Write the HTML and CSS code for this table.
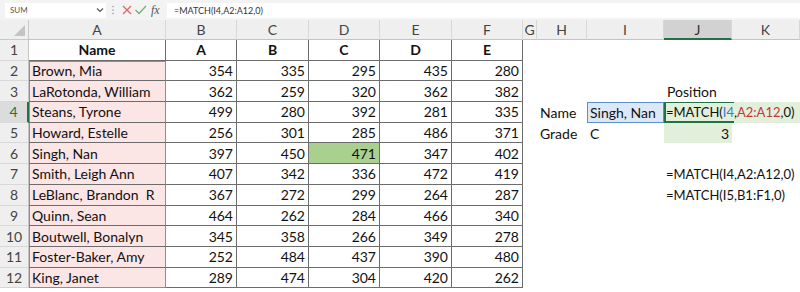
FILE: index.html
```html
<!DOCTYPE html>
<html>
<head>
<meta charset="utf-8">
<link rel="stylesheet" href="styles.css">
</head>
<body>
<div class="fbar">
  <div class="namebox"><span>SUM</span><svg width="8" height="6" viewBox="0 0 8 6"><polyline points="1,1.5 4,4.5 7,1.5" fill="none" stroke="#555" stroke-width="1.2"/></svg></div>
  <div class="tools">
    <svg width="44" height="20" viewBox="0 0 44 20">
      <circle cx="7" cy="6.5" r="0.8" fill="#9a9a9a"/><circle cx="7" cy="10" r="0.8" fill="#9a9a9a"/><circle cx="7" cy="13.5" r="0.8" fill="#9a9a9a"/>
      <path d="M17 6 L25 14 M25 6 L17 14" stroke="#e06767" stroke-width="1.3" fill="none"/>
      <polyline points="29.5,10 33,13.5 40,6" stroke="#72b072" stroke-width="1.3" fill="none"/>
    </svg>
    <span class="fx">fx</span>
  </div>
  <div class="formula">=MATCH(I4,A2:A12,0)</div>
</div>
<div class="sheet">
  <div class="corner"><svg width="11" height="11" viewBox="0 0 11 11"><polygon points="11,0 11,11 0,11" fill="#c4c4c4"/></svg></div>
  <div class="ch">A</div><div class="ch">B</div><div class="ch">C</div><div class="ch">D</div><div class="ch">E</div><div class="ch">F</div><div class="ch">G</div><div class="ch">H</div><div class="ch">I</div><div class="ch sel">J</div><div class="ch">K</div>

  <div class="rh">1</div><div class="c hd">Name</div><div class="c hd">A</div><div class="c hd">B</div><div class="c hd">C</div><div class="c hd">D</div><div class="c hd">E</div><div class="g"></div><div class="g"></div><div class="g"></div><div class="g"></div><div class="g"></div>

  <div class="rh">2</div><div class="c nm first">Brown, Mia</div><div class="c n">354</div><div class="c n">335</div><div class="c n">295</div><div class="c n">435</div><div class="c n">280</div><div class="g"></div><div class="g"></div><div class="g"></div><div class="g"></div><div class="g"></div>

  <div class="rh">3</div><div class="c nm">LaRotonda, William</div><div class="c n">362</div><div class="c n">259</div><div class="c n">320</div><div class="c n">362</div><div class="c n">382</div><div class="g"></div><div class="g"></div><div class="g"></div><div class="g x">Position</div><div class="g"></div>

  <div class="rh sel">4</div><div class="c nm">Steans, Tyrone</div><div class="c n">499</div><div class="c n">280</div><div class="c n">392</div><div class="c n">281</div><div class="c n">335</div><div class="g"></div><div class="g x">Name</div><div class="g x i4">Singh, Nan</div><div class="g fm j4">=MATCH(<span class="blue">I4</span>,<span class="red">A2:A12</span>,0)</div>

  <div class="rh">5</div><div class="c nm">Howard, Estelle</div><div class="c n">256</div><div class="c n">301</div><div class="c n">285</div><div class="c n">486</div><div class="c n">371</div><div class="g"></div><div class="g x">Grade</div><div class="g x">C</div><div class="g n j5">3</div><div class="g"></div>

  <div class="rh">6</div><div class="c nm">Singh, Nan</div><div class="c n">397</div><div class="c n">450</div><div class="c n d6">471</div><div class="c n">347</div><div class="c n">402</div><div class="g"></div><div class="g"></div><div class="g"></div><div class="g"></div><div class="g"></div>

  <div class="rh">7</div><div class="c nm">Smith, Leigh Ann</div><div class="c n">407</div><div class="c n">342</div><div class="c n">336</div><div class="c n">472</div><div class="c n">419</div><div class="g"></div><div class="g"></div><div class="g"></div><div class="g fm">=MATCH(I4,A2:A12,0)</div>

  <div class="rh">8</div><div class="c nm">LeBlanc, Brandon&nbsp; R</div><div class="c n">367</div><div class="c n">272</div><div class="c n">299</div><div class="c n">264</div><div class="c n">287</div><div class="g"></div><div class="g"></div><div class="g"></div><div class="g fm">=MATCH(I5,B1:F1,0)</div>

  <div class="rh">9</div><div class="c nm">Quinn, Sean</div><div class="c n">464</div><div class="c n">262</div><div class="c n">284</div><div class="c n">466</div><div class="c n">340</div><div class="g"></div><div class="g"></div><div class="g"></div><div class="g"></div><div class="g"></div>

  <div class="rh">10</div><div class="c nm">Boutwell, Bonalyn</div><div class="c n">345</div><div class="c n">358</div><div class="c n">266</div><div class="c n">349</div><div class="c n">278</div><div class="g"></div><div class="g"></div><div class="g"></div><div class="g"></div><div class="g"></div>

  <div class="rh">11</div><div class="c nm">Foster-Baker, Amy</div><div class="c n">252</div><div class="c n">484</div><div class="c n">437</div><div class="c n">390</div><div class="c n">480</div><div class="g"></div><div class="g"></div><div class="g"></div><div class="g"></div><div class="g"></div>

  <div class="rh">12</div><div class="c nm last">King, Janet</div><div class="c n">289</div><div class="c n">474</div><div class="c n">304</div><div class="c n">420</div><div class="c n">262</div><div class="g"></div><div class="g"></div><div class="g"></div><div class="g"></div><div class="g"></div>
</div>
</body>
</html>
```
FILE: styles.css
```css
* { box-sizing: border-box; }
html, body { margin: 0; padding: 0; }
body {
  width: 800px;
  height: 292px;
  overflow: hidden;
  background: #ffffff;
  font-family: Lato, "Open Sans", sans-serif;
}
.fbar {
  display: flex;
  align-items: center;
  height: 20px;
  background: #f3f3f3;
  padding-left: 5px;
}
.namebox {
  width: 101px;
  height: 15px;
  background: #ffffff;
  display: flex;
  align-items: center;
  justify-content: space-between;
  padding: 0 2px 0 5px;
  font-size: 8px;
  color: #555;
}
.tools {
  width: 61px;
  display: flex;
  align-items: center;
}
.fx {
  font-family: "Liberation Serif", serif;
  font-style: italic;
  font-size: 12px;
  color: #555;
  margin-left: 1px;
}
.formula {
  flex: 1;
  height: 15px;
  background: #ffffff;
  padding-left: 7px;
  font-size: 9px;
  color: #333;
  display: flex;
  align-items: center;
}
.sheet {
  display: grid;
  grid-template-columns: 29px 137px 71px 72px 71px 72px 71px 14px 50px 77px 68px 68px;
  grid-template-rows: 20px repeat(12, 20.7px);
  font-size: 14px;
  color: #111;
}
.sheet > div {
  display: flex;
  align-items: center;
  white-space: nowrap;
  overflow: hidden;
}
.corner {
  background: #efefef;
  border-right: 1px solid #c8c8c8;
  border-bottom: 1px solid #c8c8c8;
  justify-content: flex-end;
  align-items: flex-end !important;
  padding: 0 3px 3px 0;
}
.ch {
  background: #efefef;
  justify-content: center;
  color: #444;
  border-right: 1px solid #d8d8d8;
  border-bottom: 1px solid #c4c4c4;
}
.ch.sel {
  background: #d2d2d2;
  border-bottom: 2px solid #217346;
  color: #333;
}
.rh {
  background: #efefef;
  justify-content: center;
  color: #444;
  border-right: 1px solid #c4c4c4;
  border-bottom: 1px solid #d8d8d8;
}
.rh.sel {
  background: #dcdcdc;
  color: #217346;
  border-right: 2px solid #217346;
}
.c {
  border-right: 1px solid #6c6c6c;
  border-bottom: 1px solid #6c6c6c;
  padding: 0 3px;
}
.n { justify-content: flex-end; }
.hd { justify-content: center; font-weight: 700; }
.nm {
  background: #fbe5e5;
  border-right-color: #d66f72 !important;
  box-shadow: inset 1px 0 #d66f72;
  padding-left: 3px;
}
.nm.first { box-shadow: inset 1px 0 #d66f72, inset 0 1px #d66f72; }
.nm.last { border-bottom-color: #d66f72; }
.d6 { background: #a9d08e; }
.g { padding: 0 3px; }
.fm {
  grid-column: span 2;
  font-size: 13px;
  padding-left: 2px;
}
.i4 {
  background: #dde8f6;
  border: 1px solid #5b8fd0;
  padding-left: 2px;
}
.j4 {
  background: #e2efda;
  position: relative;
}
.j4::before {
  content: "";
  position: absolute;
  left: 0;
  top: 0;
  bottom: 0;
  width: 68px;
  border-left: 2px solid #217346;
  border-top: 1px solid #217346;
  border-bottom: 2px solid #217346;
}
.j5 { background: #e2efda; }
.blue { color: #3b7cc8; }
.red { color: #c4383a; }
```
